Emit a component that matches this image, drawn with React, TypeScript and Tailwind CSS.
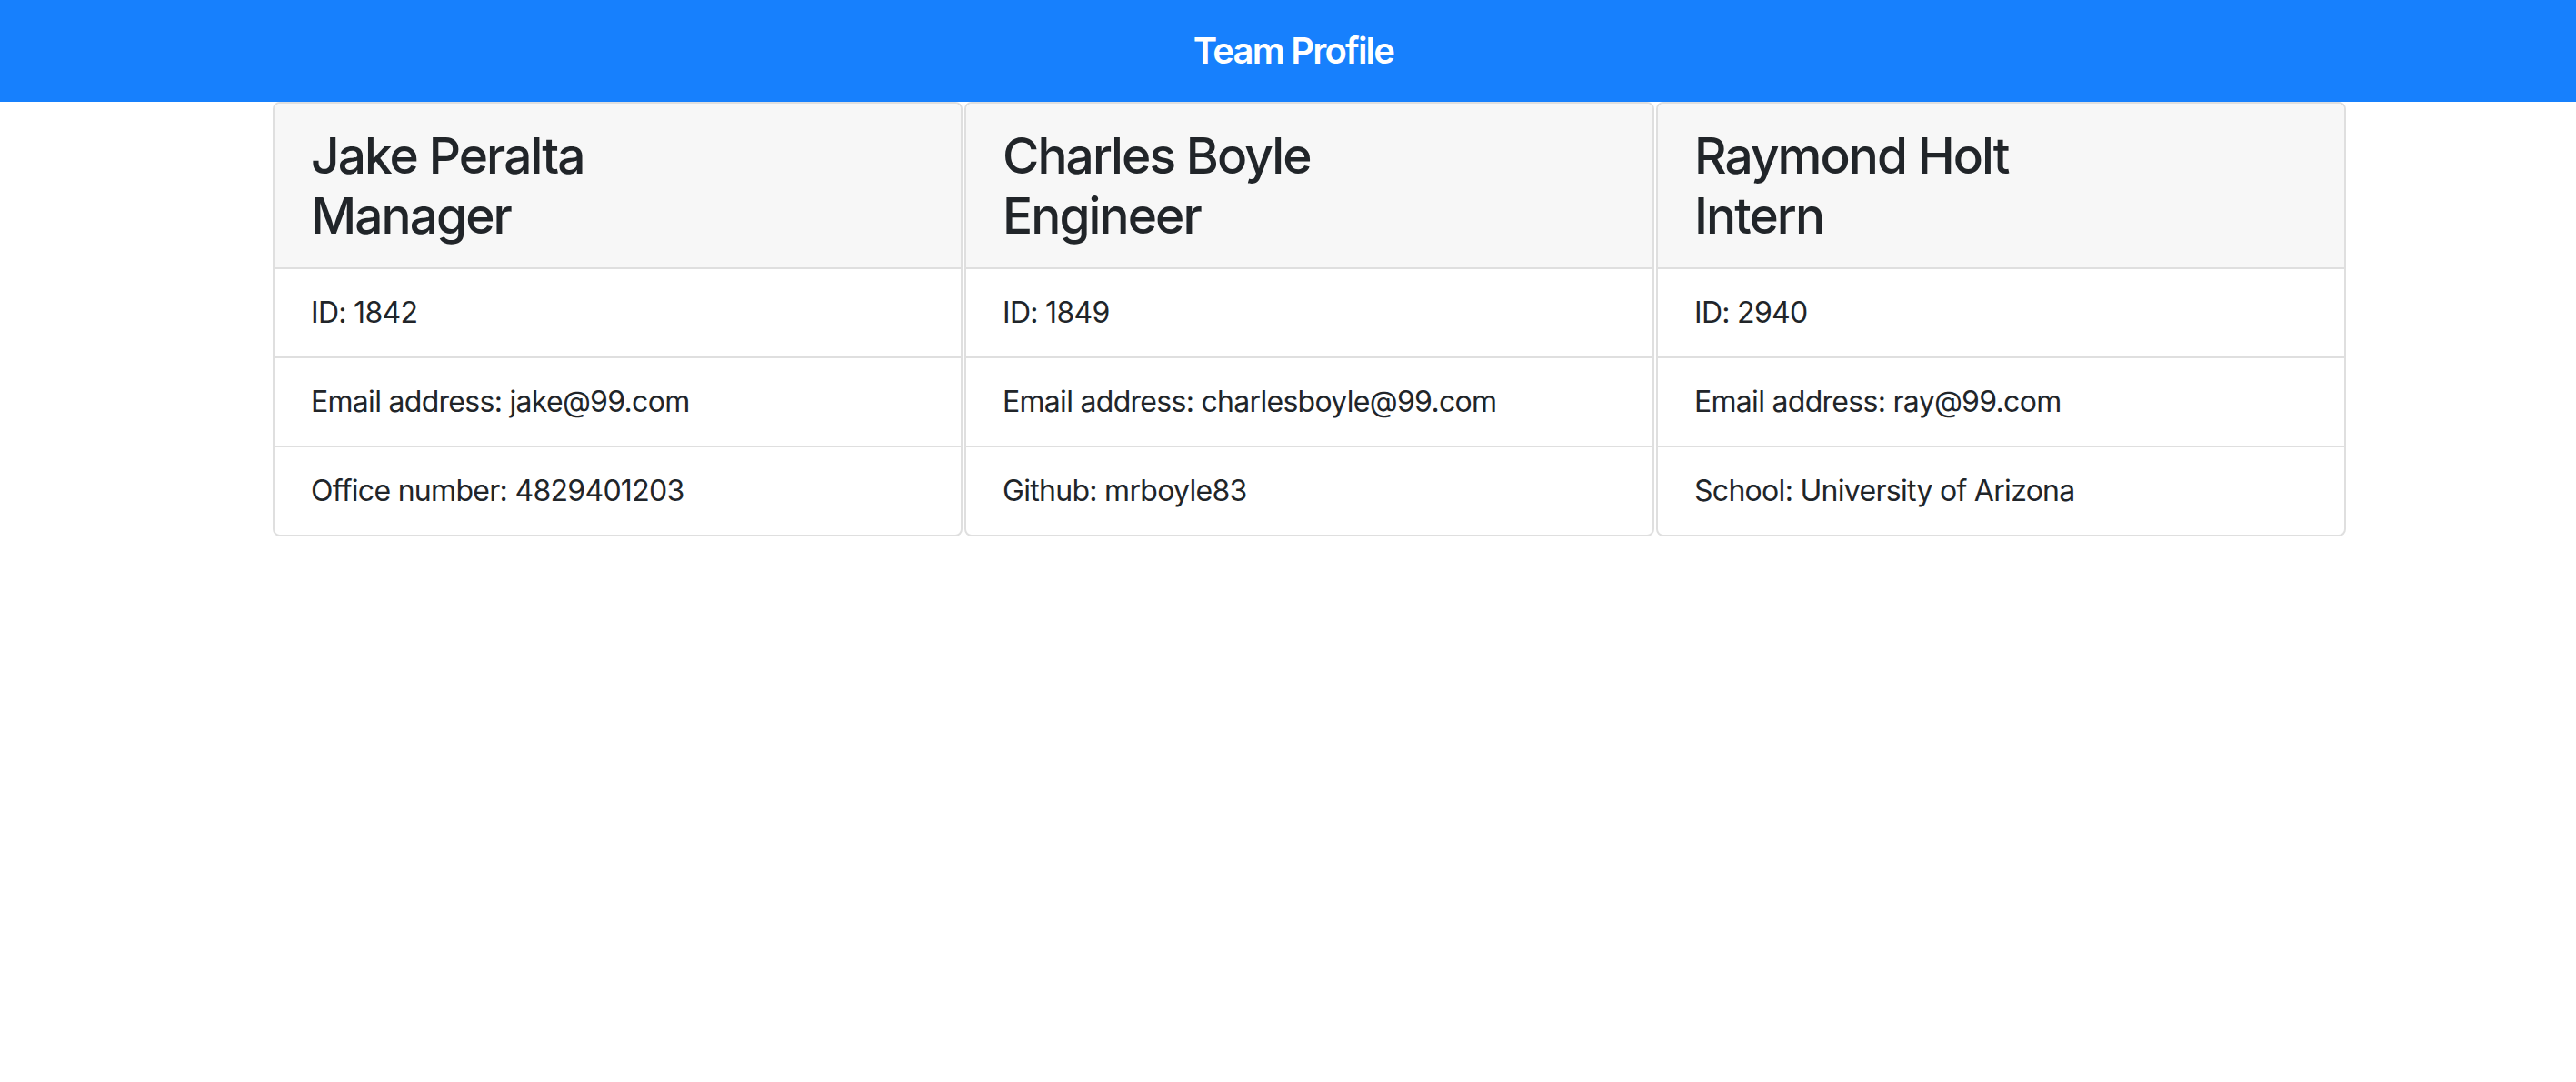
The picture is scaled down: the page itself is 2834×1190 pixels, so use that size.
import React from 'react'

interface Member {
    name: string
    role: string
    id: string
    email: string
    extra: string
}

const team: Member[] = [
    { name: 'Jake Peralta', role: 'Manager', id: '1842', email: 'jake@99.com', extra: 'Office number: 4829401203' },
    { name: 'Charles Boyle', role: 'Engineer', id: '1849', email: 'charlesboyle@99.com', extra: 'Github: mrboyle83' },
    { name: 'Raymond Holt', role: 'Intern', id: '2940', email: 'ray@99.com', extra: 'School: University of Arizona' },
]

const MemberCard: React.FC<{ member: Member }> = ({ member }) => {
    const rows = [`ID: ${member.id}`, `Email address: ${member.email}`, member.extra]

    return (
        <div className="flex w-[759px] flex-col overflow-hidden rounded-[8px] border-2 border-[#dfdfdf] bg-white">
            <div className="border-b-2 border-[#dfdfdf] bg-[#f7f7f7] px-[40px] py-[24px]">
                <h3 className="text-[55px] font-medium leading-[66px] tracking-[-0.035em] text-[#212529]">
                    {member.name}
                    <br />
                    {member.role}
                </h3>
            </div>
            {rows.map((row, i) => (
                <div
                    key={row}
                    className={`px-[40px] py-[24px] text-[32px] leading-[48px] tracking-[-0.022em] text-[#212529] ${
                        i < rows.length - 1 ? 'border-b-2 border-[#dfdfdf]' : ''
                    }`}
                >
                    {row}
                </div>
            ))}
        </div>
    )
}

const App: React.FC = () => {
    return (
        <div className="min-h-[1190px] w-full bg-white font-['Inter',sans-serif]">
            <header className="flex h-[112px] items-center justify-center bg-[#1780fd]">
                <h1 className="pl-[12px] text-[40px] font-semibold tracking-[-0.045em] text-white">Team Profile</h1>
            </header>
            <main className="flex gap-[2px] pl-[300px]">
                {team.map((m) => (
                    <MemberCard key={m.name} member={m} />
                ))}
            </main>
        </div>
    )
}

export default App
